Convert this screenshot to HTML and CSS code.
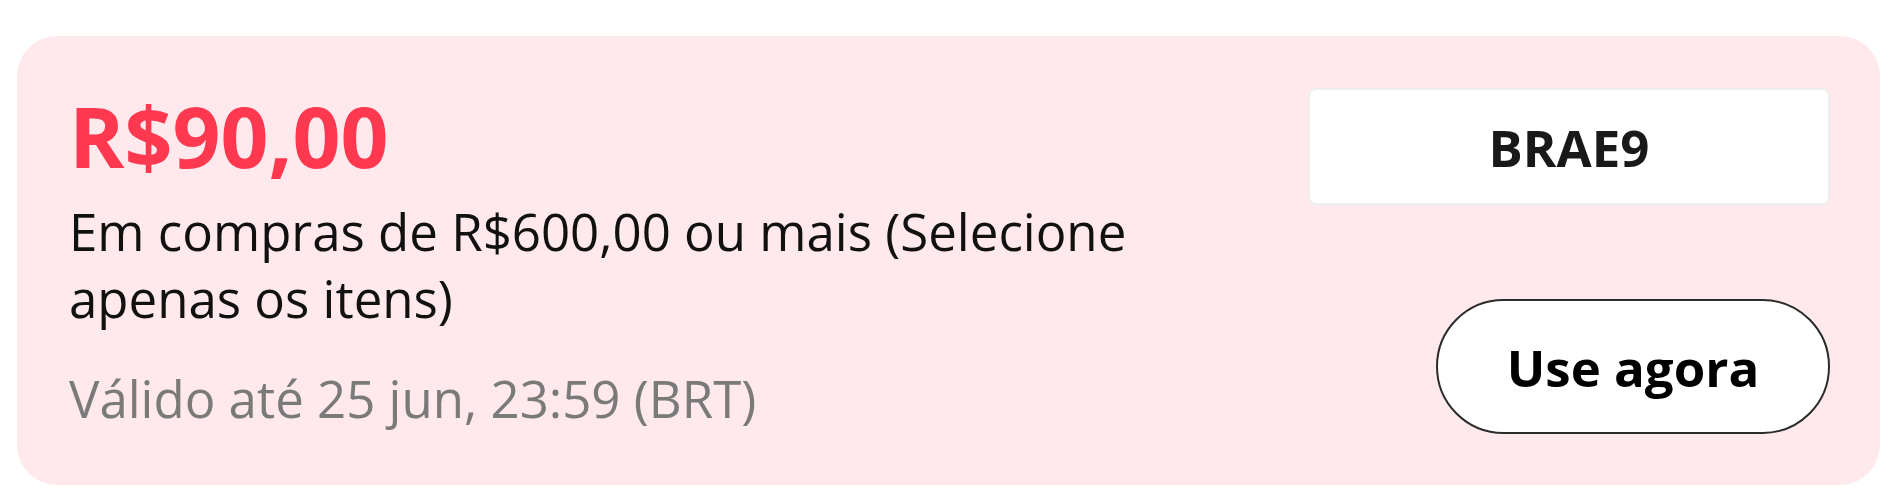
FILE: index.html
```html
<!DOCTYPE html>
<html lang="pt-BR">
<head>
    <meta charset="UTF-8">
    <meta name="viewport" content="width=device-width, initial-scale=1.0">
    <title>Cupom</title>
    <link rel="stylesheet" href="styles.css">
</head>
<body>
    <div class="coupon">
        <div class="coupon-info">
            <div class="amount">R$90,00</div>
            <div class="condition">Em compras de R$600,00 ou mais (Selecione apenas os itens)</div>
            <div class="validity">Válido até 25 jun, 23:59 (BRT)</div>
        </div>
        <div class="coupon-actions">
            <div class="code">BRAE9</div>
            <button class="use-button">Use agora</button>
        </div>
    </div>
</body>
</html>
```

FILE: styles.css
```css
body {
    margin: 0;
    background-color: #fff;
    font-family: 'Open Sans', 'Noto Sans', sans-serif;
    color: #000;
}
.coupon {
    margin: 36px 18px 0 17px;
    padding: 50px 50px 51px 52px;
    background-color: #ffe9ec;
    border-radius: 40px;
    display: flex;
    justify-content: space-between;
    gap: 80px;
}
.coupon-info {
    flex: 1;
    min-width: 0;
}
.amount {
    font-size: 84px;
    font-weight: bold;
    line-height: 100px;
    color: #fd384f;
}
.condition {
    margin-top: 12px;
    font-size: 51px;
    line-height: 67px;
    color: #111;
}
.validity {
    margin-top: 31px;
    font-size: 51px;
    line-height: 71px;
    color: #7a7a7a;
}
.coupon-actions {
    width: 522px;
    display: flex;
    flex-direction: column;
    align-items: flex-end;
    justify-content: space-between;
}
.code {
    width: 100%;
    box-sizing: border-box;
    height: 117px;
    margin-top: 2px;
    display: flex;
    align-items: center;
    justify-content: center;
    background-color: #fff;
    border: 2px solid #eee;
    border-radius: 8px;
    font-size: 51px;
    font-weight: bold;
    color: #191919;
}
.use-button {
    width: 394px;
    height: 135px;
    background-color: #fff;
    border: 2px solid #2b2b2b;
    border-radius: 68px;
    font-family: inherit;
    font-size: 51px;
    font-weight: bold;
    color: #000;
    cursor: pointer;
}
```
